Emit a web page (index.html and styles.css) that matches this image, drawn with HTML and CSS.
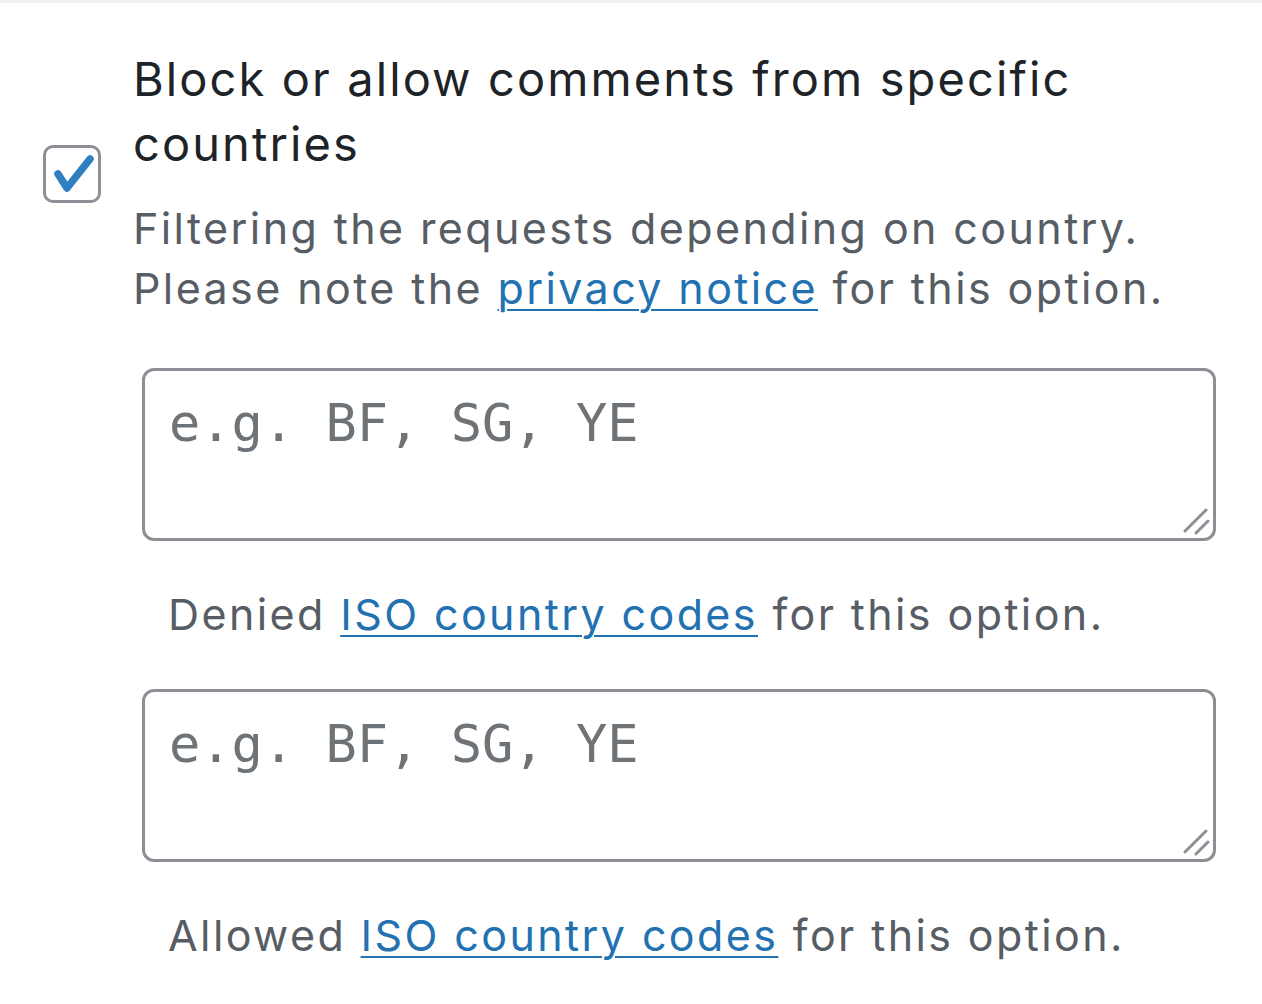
FILE: index.html
```html
<!DOCTYPE html>
<html lang="en">
<head>
    <meta charset="UTF-8">
    <meta name="viewport" content="width=device-width, initial-scale=1.0">
    <title>Country filter</title>
    <link rel="stylesheet" href="styles.css">
</head>
<body>
    <div class="top-strip"></div>
    <div class="option">
        <label class="check-box" for="country-filter">
            <input type="checkbox" id="country-filter" checked>
            <svg class="check-mark" width="58" height="58" viewBox="0 0 58 58">
                <path d="M15 29 L24 43 L47 14" fill="none" stroke="#2f7fc1" stroke-width="7.5" stroke-linecap="round" stroke-linejoin="round"/>
            </svg>
        </label>
        <div class="option-body">
            <label class="option-title" for="country-filter">Block or allow comments from specific countries</label>
            <p class="description">Filtering the requests depending on country. Please note the <a href="#">privacy notice</a> for this option.</p>

            <div class="field">
                <textarea class="codes" rows="2" placeholder="e.g. BF, SG, YE"></textarea>
                <svg class="grip" width="28" height="28" viewBox="0 0 28 28">
                    <path d="M3 24 L24 3 M14 26 L26 14" stroke="#8c8f94" stroke-width="3" stroke-linecap="round"/>
                </svg>
            </div>
            <p class="field-note">Denied <a href="#">ISO country codes</a> for this option.</p>

            <div class="field">
                <textarea class="codes" rows="2" placeholder="e.g. BF, SG, YE"></textarea>
                <svg class="grip" width="28" height="28" viewBox="0 0 28 28">
                    <path d="M3 24 L24 3 M14 26 L26 14" stroke="#8c8f94" stroke-width="3" stroke-linecap="round"/>
                </svg>
            </div>
            <p class="field-note">Allowed <a href="#">ISO country codes</a> for this option.</p>
        </div>
    </div>
</body>
</html>
```

FILE: styles.css
```css
body {
    font-family: 'Inter', 'Liberation Sans', Arial, sans-serif;
    background: #fff;
    margin: 0;
    padding: 0;
    color: #1d2327;
    overflow: hidden;
}

.top-strip {
    height: 3px;
    background: #f0f0f1;
}

.option {
    display: flex;
    padding: 43px 46px 0 43px;
}

.check-box {
    position: relative;
    flex: 0 0 auto;
    width: 58px;
    height: 58px;
    margin-top: 99px;
    margin-right: 32px;
    box-sizing: border-box;
    border: 3px solid #8c8f94;
    border-radius: 10px;
    background: #fff;
}

.check-box input {
    position: absolute;
    opacity: 0;
    margin: 0;
}

.check-mark {
    position: absolute;
    top: -3px;
    left: -3px;
}

.option-body {
    flex: 1;
}

.option-title {
    display: block;
    max-width: 1030px;
    font-size: 47px;
    line-height: 65px;
    letter-spacing: 2.1px;
    color: #1d2327;
}

.description {
    max-width: 1040px;
    margin: 22px 0 0;
    font-size: 43px;
    line-height: 60px;
    letter-spacing: 2.4px;
    color: #575d64;
}

a {
    color: #2271b1;
    text-decoration: underline;
    text-decoration-thickness: 2px;
    text-underline-offset: 5px;
}

.field {
    position: relative;
    margin: 50px 0 0 9px;
}

.codes {
    display: block;
    width: 100%;
    height: 173px;
    box-sizing: border-box;
    padding: 16px 24px;
    border: 3px solid #8c8f94;
    border-radius: 12px;
    font-family: 'DejaVu Sans Mono', 'Liberation Mono', monospace;
    font-size: 52px;
    line-height: 72px;
    color: #2c3338;
    background: #fff;
    resize: none;
    outline: none;
}

.codes::placeholder {
    color: #6e7378;
}

.grip {
    position: absolute;
    right: 6px;
    bottom: 6px;
}

.field-note {
    margin: 43px 0 0 35px;
    font-size: 43px;
    line-height: 60px;
    letter-spacing: 2.4px;
    color: #575d64;
}

.field + .field-note + .field {
    margin-top: 45px;
}
```
